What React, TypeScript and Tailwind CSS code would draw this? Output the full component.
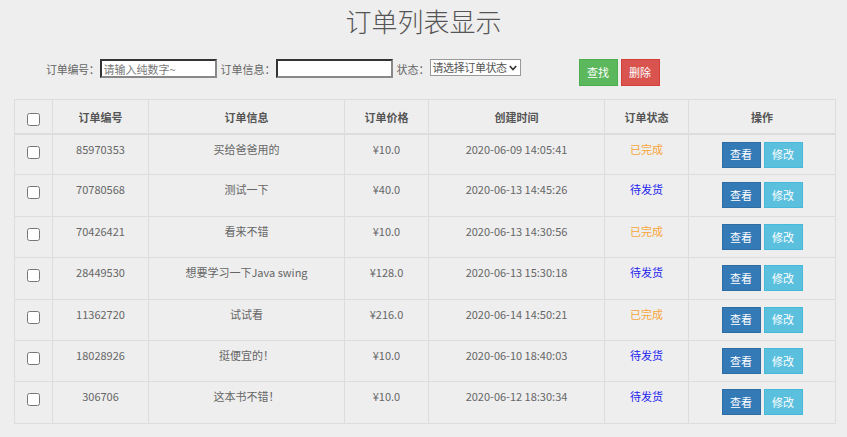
const orders = [
  { id: "85970353", info: "买给爸爸用的", price: "¥10.0", time: "2020-06-09 14:05:41", done: true },
  { id: "70780568", info: "测试一下", price: "¥40.0", time: "2020-06-13 14:45:26", done: false },
  { id: "70426421", info: "看来不错", price: "¥10.0", time: "2020-06-13 14:30:56", done: true },
  { id: "28449530", info: "想要学习一下Java swing", price: "¥128.0", time: "2020-06-13 15:30:18", done: false },
  { id: "11362720", info: "试试看", price: "¥216.0", time: "2020-06-14 14:50:21", done: true },
  { id: "18028926", info: "挺便宜的！", price: "¥10.0", time: "2020-06-10 18:40:03", done: false },
  { id: "306706", info: "这本书不错！", price: "¥10.0", time: "2020-06-12 18:30:34", done: false },
]

const font = "font-['Noto_Sans_CJK_SC','Noto_Sans',sans-serif]"

export default function App() {
  return (
    <main className={`w-full h-[437px] bg-[#eeeeee] text-[#666] text-[11px] overflow-hidden ${font}`}>
      <h1 className="text-center text-[26px] leading-[40px] text-[#555] pt-[1px] font-light">订单列表显示</h1>

      <div className="flex items-start pl-[46px] mt-[18px] h-[40px] whitespace-nowrap">
        <span className="leading-[19px] mt-[1px] tracking-[-0.3px]">订单编号：</span>
        <input
          className="shrink-0 w-[117px] h-[19px] border-2 border-t-[#333] border-l-[#333] border-b-[#888] border-r-[#888] bg-white px-[2px] text-[11px] leading-[15px] placeholder:text-[#777] outline-none"
          placeholder="请输入纯数字~"
        />
        <span className="leading-[19px] mt-[1px] ml-[4px]">订单信息：</span>
        <input className="shrink-0 w-[117px] h-[19px] border-2 border-t-[#333] border-l-[#333] border-b-[#888] border-r-[#888] bg-white outline-none" />
        <span className="leading-[19px] mt-[1px] ml-[4px]">状态：</span>
        <div className="shrink-0 w-[91px] h-[17px] border border-[#999] bg-white text-[11px] leading-[15px] text-[#555] flex items-center justify-between pl-[2px] pr-[3px]">
          <span className="whitespace-nowrap tracking-[-0.4px]">请选择订单状态</span>
          <svg width="8" height="6" viewBox="0 0 8 6" className="shrink-0 mt-[1px]">
            <path d="M0.8 1 L4 4.6 L7.2 1" fill="none" stroke="#333" strokeWidth="1.6" />
          </svg>
        </div>
        <button className="shrink-0 ml-[58px] w-[39px] h-[27px] bg-[#5cb85c] border border-[#4cae4c] text-white text-[11px]">查找</button>
        <button className="shrink-0 ml-[3px] w-[39px] h-[27px] bg-[#d9534f] border border-[#d43f3a] text-white text-[11px]">删除</button>
      </div>

      <table className="ml-[14px] w-[821px] table-fixed border-collapse border border-[#ddd]">
        <colgroup>
          <col className="w-[38px]" />
          <col className="w-[96px]" />
          <col className="w-[196px]" />
          <col className="w-[84px]" />
          <col className="w-[176px]" />
          <col className="w-[84px]" />
          <col className="w-[147px]" />
        </colgroup>
        <thead>
          <tr className="h-[34px] text-[#555] font-bold">
            <th className="border border-[#ddd] border-b-2 align-middle pt-[2px]">
              <input type="checkbox" className="w-[13px] h-[13px] align-middle" />
            </th>
            <th className="border border-[#ddd] border-b-2 pt-[2px]">订单编号</th>
            <th className="border border-[#ddd] border-b-2 pt-[2px]">订单信息</th>
            <th className="border border-[#ddd] border-b-2 pt-[2px]">订单价格</th>
            <th className="border border-[#ddd] border-b-2 pt-[2px]">创建时间</th>
            <th className="border border-[#ddd] border-b-2 pt-[2px]">订单状态</th>
            <th className="border border-[#ddd] border-b-2 pt-[2px]">操作</th>
          </tr>
        </thead>
        <tbody>
          {orders.map((o) => (
            <tr key={o.id} className="h-[41.4px] text-center">
              <td className="border border-[#ddd] align-top pt-[11px]">
                <input type="checkbox" className="w-[13px] h-[13px] align-top" />
              </td>
              <td className="border border-[#ddd] align-top pt-[6px] leading-[17px]">{o.id}</td>
              <td className="border border-[#ddd] align-top pt-[6px] leading-[17px]">{o.info}</td>
              <td className="border border-[#ddd] align-top pt-[6px] leading-[17px]">{o.price}</td>
              <td className="border border-[#ddd] align-top pt-[6px] leading-[17px]">{o.time}</td>
              <td
                className={`border border-[#ddd] align-top pt-[6px] leading-[17px] ${o.done ? "text-[#f7a53a]" : "text-[#2222ee]"}`}
              >
                {o.done ? "已完成" : "待发货"}
              </td>
              <td className="border border-[#ddd] align-top pt-[7px]">
                <div className="flex justify-center gap-[3px]">
                  <button className="w-[39px] h-[26px] bg-[#337ab7] border border-[#2e6da4] text-white text-[11px]">查看</button>
                  <button className="w-[39px] h-[26px] bg-[#5bc0de] border border-[#46b8da] text-white text-[11px]">修改</button>
                </div>
              </td>
            </tr>
          ))}
        </tbody>
      </table>
    </main>
  )
}
